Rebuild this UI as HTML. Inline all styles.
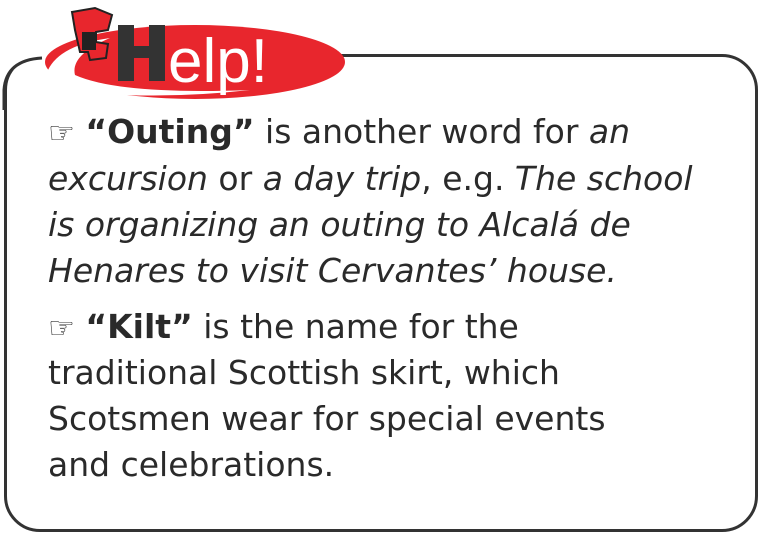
<!DOCTYPE html>
<html><head><style>
body{margin:0;width:764px;height:536px;background:#fff;position:relative;overflow:hidden;font-family:"DejaVu Sans",sans-serif;color:#2a2a2a}
.box{position:absolute;left:4px;top:54px;width:748px;height:472px;border:3px solid #333;border-radius:36px}
.t{position:absolute;left:48px;font-size:33px;white-space:nowrap;line-height:1}
i{font-style:italic}
b{font-weight:bold}
.h{font-size:30px;color:#333}
</style></head><body>
<div class="box"></div>
<svg style="position:absolute;left:0;top:0" width="380" height="110">
<rect x="0" y="40" width="60" height="30" fill="#fff"/>
<ellipse cx="195" cy="62" rx="150" ry="37" fill="#e8262d"/>
<path d="M48 70 Q60 45 110 38 Q70 55 75 75 Q120 95 250 90 Q160 100 80 92 Q45 85 48 70Z" fill="#fff"/>
<path d="M4 110 L4 90 Q6 60 42 58" stroke="#333" stroke-width="3" fill="none"/>
<rect x="118" y="25" width="16" height="56" fill="#333"/><rect x="149" y="25" width="16" height="56" fill="#333"/><rect x="118" y="46" width="46" height="12" fill="#333"/>
<text x="168" y="82" font-family="Liberation Sans" font-size="62" fill="#fff">elp!</text>
<path d="M72 12 L95 8 L112 15 L108 30 L96 32 L96 42 L108 44 L106 58 L90 60 L88 52 L80 52 L75 30Z" fill="#e8262d" stroke="#222" stroke-width="2"/>
<rect x="82" y="32" width="14" height="18" fill="#222"/>
</svg>
<div class="t" style="top:115px"><span class="h">☞</span> <b>“Outing”</b> is another word for <i>an</i></div>
<div class="t" style="top:162px"><i>excursion</i> or <i>a day trip</i>, e.g. <i>The school</i></div>
<div class="t" style="top:208px"><i>is organizing an outing to Alcalá de</i></div>
<div class="t" style="top:254px"><i>Henares to visit Cervantes’ house.</i></div>
<div class="t" style="top:310px"><span class="h">☞</span> <b>“Kilt”</b> is the name for the</div>
<div class="t" style="top:356px">traditional Scottish skirt, which</div>
<div class="t" style="top:402px">Scotsmen wear for special events</div>
<div class="t" style="top:448px">and celebrations.</div>
</body></html>
